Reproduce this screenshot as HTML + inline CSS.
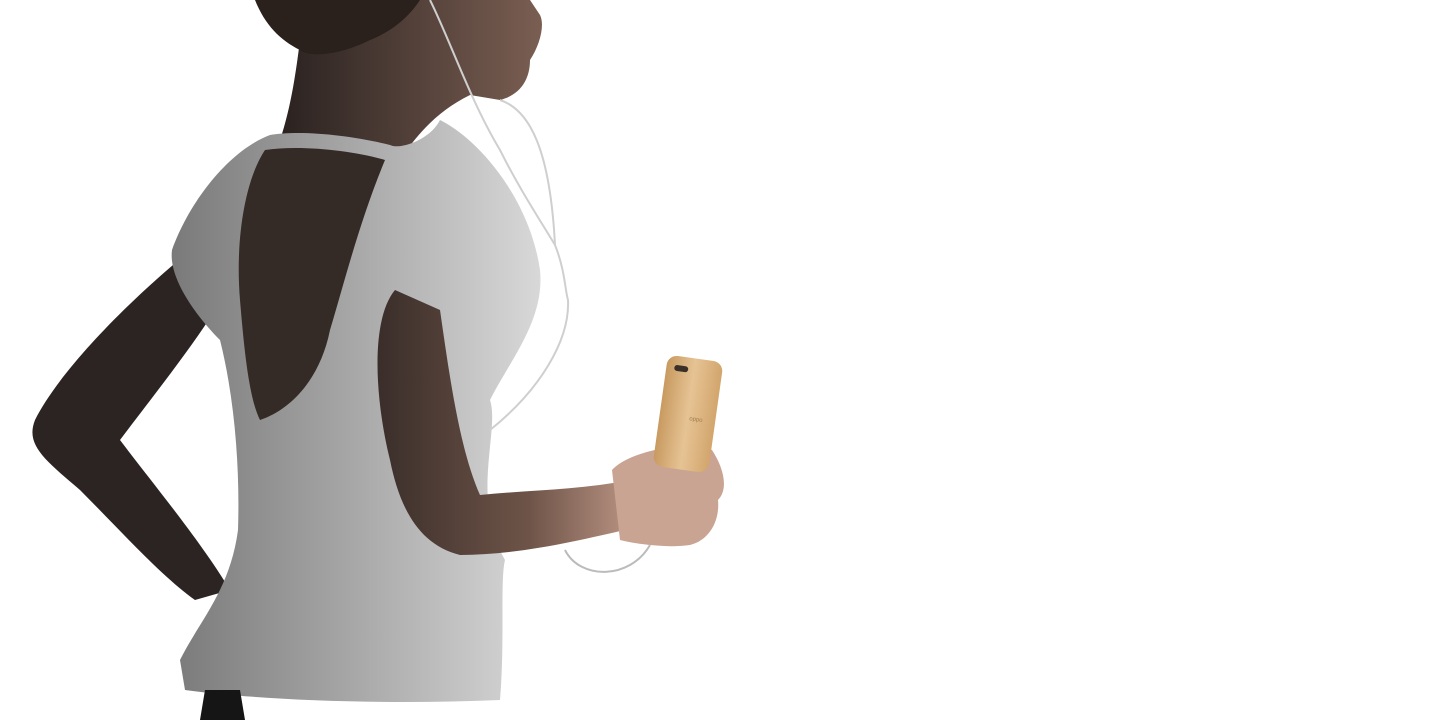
<!DOCTYPE html>
<html><head><meta charset="utf-8"><style>
html,body{margin:0;padding:0;background:#fff;width:1440px;height:720px;overflow:hidden}
svg{display:block}
</style></head><body>
<svg width="1440" height="720" viewBox="0 0 1440 720" xmlns="http://www.w3.org/2000/svg">
<defs>
<linearGradient id="shirt" x1="0" y1="0" x2="1" y2="0">
<stop offset="0" stop-color="#7a7a7a"/><stop offset="0.5" stop-color="#a8a8a8"/><stop offset="1" stop-color="#d8d8d8"/>
</linearGradient>
<linearGradient id="arm" x1="0" y1="0" x2="1" y2="0">
<stop offset="0" stop-color="#3a2e2a"/><stop offset="0.6" stop-color="#6e5448"/><stop offset="1" stop-color="#b89282"/>
</linearGradient>
<linearGradient id="phone" x1="0" y1="0" x2="1" y2="0">
<stop offset="0" stop-color="#c89a60"/><stop offset="0.5" stop-color="#e6c394"/><stop offset="1" stop-color="#d2a56c"/>
</linearGradient>
<linearGradient id="face" x1="0" y1="0" x2="1" y2="0">
<stop offset="0" stop-color="#2a2220"/><stop offset="1" stop-color="#7a5e52"/>
</linearGradient>
</defs>
<rect width="1440" height="720" fill="#fff"/>
<path d="M185 255 C130 300 60 370 35 420 C25 445 45 460 80 490 C120 530 160 575 195 600 L230 590 C200 540 150 480 120 440 C150 400 190 350 215 310 Z" fill="#2c2422"/>
<path d="M300 40 C295 80 290 110 280 140 L400 160 C420 130 440 110 470 95 L500 100 C520 95 530 80 530 60 C540 45 545 25 540 15 L530 0 L420 0 Z" fill="url(#face)"/>
<path d="M255 0 L420 0 C410 15 395 30 370 40 C340 55 310 58 300 50 C280 40 265 25 255 0 Z" fill="#2a201c"/>
<path d="M270 135 C230 150 190 200 172 250 C168 280 200 320 220 340 C235 400 240 470 238 530 C230 590 200 620 180 660 L185 690 C260 700 380 705 500 700 C505 640 500 580 505 560 C470 500 500 430 490 400 C510 360 545 320 540 270 C530 200 480 140 440 120 C430 140 400 150 390 145 C350 135 300 130 270 135 Z" fill="url(#shirt)"/>
<path d="M265 150 C245 180 235 240 240 300 C245 360 250 400 260 420 C290 410 320 380 330 330 C345 280 360 220 385 160 C350 150 300 145 265 150 Z" fill="#342a26"/>
<path d="M395 290 C370 320 375 400 390 460 C400 510 420 545 460 555 C520 555 580 540 625 530 L630 480 C580 490 530 490 480 495 C460 450 450 380 440 310 Z" fill="url(#arm)"/>
<path d="M612 470 C630 450 690 440 712 450 C725 470 728 490 718 500 C720 520 710 540 690 545 C670 548 640 545 620 540 Z" fill="#c9a492"/>
<g transform="rotate(8 688 414)">
<rect x="660" y="358" width="56" height="112" rx="10" fill="url(#phone)"/>
<rect x="668" y="367" width="14" height="6" rx="3" fill="#3a3028"/>
<text x="690" y="420" font-family="Liberation Sans, sans-serif" font-size="6" fill="#a07c50">oppo</text>
</g>
<path d="M430 0 C450 40 470 100 500 150 C520 190 540 220 555 245 C565 270 565 290 568 300 C570 340 540 390 490 430" fill="none" stroke="#cfcfcf" stroke-width="2"/>
<path d="M500 100 C530 110 550 150 555 245" fill="none" stroke="#cfcfcf" stroke-width="2"/>
<path d="M565 550 C580 580 630 580 650 545" fill="none" stroke="#bbb" stroke-width="2"/>
<path d="M205 690 L240 690 L245 720 L200 720 Z" fill="#151515"/>
</svg>
</body></html>
